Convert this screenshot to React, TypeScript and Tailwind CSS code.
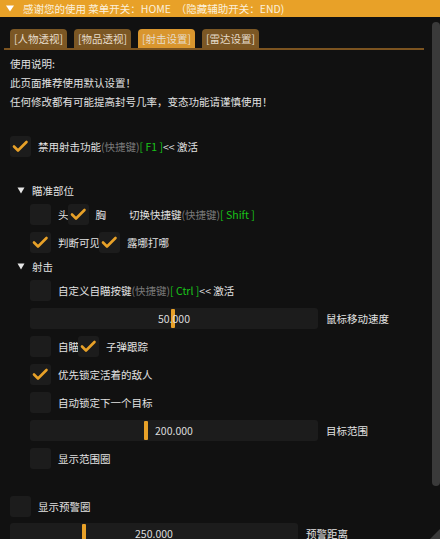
import React from 'react';

const ORANGE = '#e8a128';

function Check({ on }: { on?: boolean }) {
  return (
    <div className="w-[21px] h-[21px] shrink-0 rounded-[3px] bg-[#1c1c1c] flex items-center justify-center">
      {on && (
        <svg width="21" height="21" viewBox="0 0 21 21">
          <polyline points="4,10.5 8,14.5 16.5,6" fill="none" stroke={ORANGE} strokeWidth="2.6" strokeLinecap="round" strokeLinejoin="round" />
        </svg>
      )}
    </div>
  );
}

function Slider({ value, pos, width, label }: { value: string; pos: number; width: number; label: string }) {
  return (
    <div className="flex items-center h-[21px]">
      <div className="relative h-[21px] rounded-[3px] bg-[#1c1c1c] flex items-center justify-center" style={{ width }}>
        <div className="absolute top-[1px] w-[4px] h-[19px] rounded-[1px] bg-[#e8a128]" style={{ left: pos }} />
        <span className="relative text-[#dcdcdc]">{value}</span>
      </div>
      <span className="ml-[8px]">{label}</span>
    </div>
  );
}

function Node({ title, mt }: { title: string; mt: string }) {
  return (
    <div className={`flex items-center h-[21px] ${mt}`}>
      <svg width="8" height="7" viewBox="0 0 8 7" className="ml-[17px]">
        <polygon points="0.5,0.5 7.5,0.5 4,6.5" fill="#e6e6e6" />
      </svg>
      <span className="ml-[7px]">{title}</span>
    </div>
  );
}

export default function App() {
  const tabs = ['[人物透视]', '[物品透视]', '[射击设置]', '[雷达设置]'];
  return (
    <div
      className="relative w-[440px] h-[539px] overflow-hidden bg-[#111111] text-[10.5px] text-[#e2e2e2]"
      style={{ fontFamily: '"Noto Sans CJK SC", "Noto Sans", sans-serif' }}
    >
      <div className="h-[17px] bg-[#e8a128] flex items-center pl-[6px] text-[#fbf0dc]">
        <svg width="8" height="7" viewBox="0 0 8 7">
          <polygon points="0,0.5 8,0.5 4,6.5" fill="#ffffff" />
        </svg>
        <span className="ml-[9px] whitespace-pre">感谢您的使用 菜单开关：HOME  （隐藏辅助开关：END)</span>
      </div>

      <div className="flex">
        <div className="flex-1">
          <div className="mt-[12px] px-[4px]">
            <div className="flex gap-[7px] pl-[6px]">
              {tabs.map((t, i) => (
                <div
                  key={t}
                  className={`w-[57px] h-[19px] rounded-t-[4px] flex items-center pl-[4px] text-[#e6dccb] ${i === 2 ? 'bg-[#d9962e]' : 'bg-[#7b5724]'}`}
                >
                  {t}
                </div>
              ))}
            </div>
            <div className="h-[2px] w-[420px] bg-[#7c5420]" />
          </div>

          <div className="mt-[4px] pl-[10px] leading-[19px]">
            <div>使用说明:</div>
            <div>此页面推荐使用默认设置！</div>
            <div>任何修改都有可能提高封号几率，变态功能请谨慎使用！</div>
          </div>

          <div className="mt-[25px] pl-[10px] flex items-center gap-[7px]">
            <Check on />
            <span>
              禁用射击功能<span className="text-[#7a7a7a]">(快捷键)</span>
              <span className="text-[#19c419]">[ F1 ]</span>&lt;&lt; 激活
            </span>
          </div>

          <Node title="瞄准部位" mt="mt-[23px]" />
          <div className="mt-[3px] pl-[30px] flex items-center h-[21px]">
            <Check />
            <span className="ml-[7px]">头</span>
            <span className="ml-[-1px]"><Check on /></span>
            <span className="ml-[7px]">胸</span>
            <span className="ml-[23px]">
              切换快捷键<span className="text-[#7a7a7a]">(快捷键)</span>
              <span className="text-[#19c419]">[ Shift ]</span>
            </span>
          </div>
          <div className="mt-[7px] pl-[30px] flex items-center h-[21px]">
            <Check on />
            <span className="ml-[7px] mr-[-1px]">判断可见</span>
            <Check on />
            <span className="ml-[7px]">露哪打哪</span>
          </div>

          <Node title="射击" mt="mt-[3px]" />
          <div className="mt-[3px] pl-[30px] flex items-center h-[21px]">
            <Check />
            <span className="ml-[7px]">
              自定义自瞄按键<span className="text-[#7a7a7a]">(快捷键)</span>
              <span className="text-[#19c419]">[ Ctrl ]</span>&lt;&lt; 激活
            </span>
          </div>
          <div className="mt-[7px] pl-[30px]">
            <Slider value="50.000" pos={141} width={288} label="鼠标移动速度" />
          </div>
          <div className="mt-[7px] pl-[30px] flex items-center h-[21px]">
            <Check />
            <span className="ml-[7px] mr-[-1px]">自瞄</span>
            <Check on />
            <span className="ml-[7px]">子弹跟踪</span>
          </div>
          <div className="mt-[7px] pl-[30px] flex items-center h-[21px]">
            <Check on />
            <span className="ml-[7px]">优先锁定活着的敌人</span>
          </div>
          <div className="mt-[7px] pl-[30px] flex items-center h-[21px]">
            <Check />
            <span className="ml-[7px]">自动锁定下一个目标</span>
          </div>
          <div className="mt-[7px] pl-[30px]">
            <Slider value="200.000" pos={114} width={288} label="目标范围" />
          </div>
          <div className="mt-[7px] pl-[30px] flex items-center h-[21px]">
            <Check />
            <span className="ml-[7px]">显示范围圈</span>
          </div>

          <div className="mt-[27px] pl-[10px] flex items-center h-[21px]">
            <Check />
            <span className="ml-[7px]">显示预警圈</span>
          </div>
          <div className="mt-[6px] pl-[10px]">
            <Slider value="250.000" pos={72} width={288} label="预警距离" />
          </div>
        </div>

        <div className="w-[8px] shrink-0">
          <div className="mt-[5px] h-[464px] rounded-full bg-[#3a3a3a]" />
        </div>
      </div>

      <svg width="10" height="10" viewBox="0 0 10 10" className="absolute right-0 bottom-0">
        <polygon points="10,0 10,10 0,10" fill="#3a3a3a" />
      </svg>
    </div>
  );
}
